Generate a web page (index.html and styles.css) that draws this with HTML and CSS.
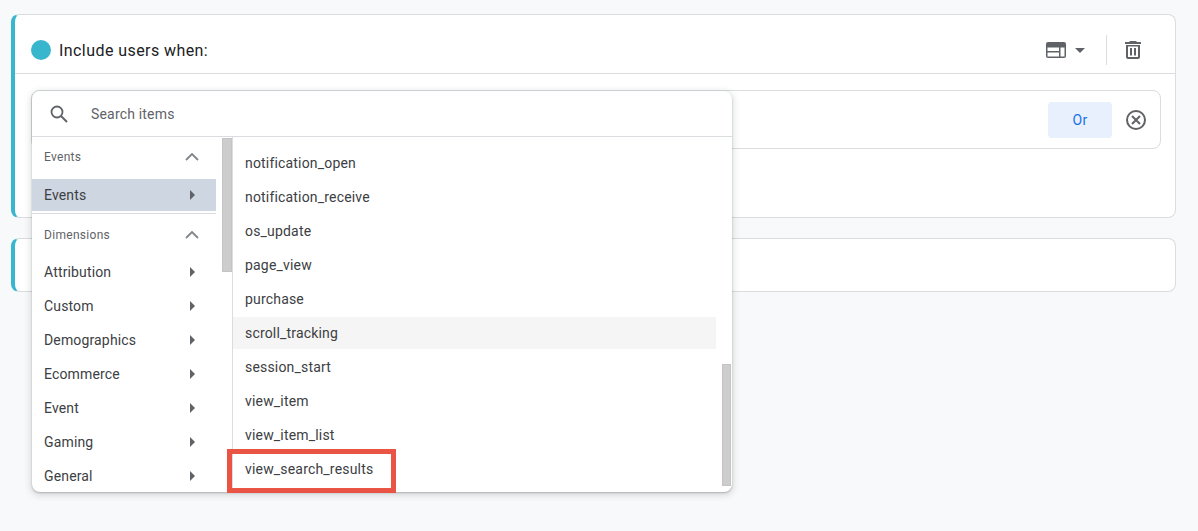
FILE: index.html
```html
<!DOCTYPE html>
<html lang="en">
<head>
<meta charset="utf-8">
<title>Include users when</title>
<link rel="stylesheet" href="styles.css">
</head>
<body>
<main class="page">
  <section class="card card-main">
    <header class="card-head">
      <span class="dot"></span>
      <h2 class="title">Include users when:</h2>
      <div class="head-tools">
        <svg class="ic-scope" width="20" height="16" viewBox="0 0 20 16"><path fill="#5f6368" fill-rule="evenodd" d="M2 0h16a2 2 0 0 1 2 2v12a2 2 0 0 1-2 2H2a2 2 0 0 1-2-2V2a2 2 0 0 1 2-2zM1.500 5.500v3.500h11.500V5.500zM1.500 10.500v4h11.500v-4zM14.500 5.500v9h4v-9z"/></svg>
        <svg class="ic-caret" width="10" height="5" viewBox="0 0 10 5"><path fill="#5f6368" d="M0 0h10L5 5z"/></svg>
        <span class="tool-sep"></span>
        <svg class="ic-trash" width="16" height="18" viewBox="0 0 16 18"><path fill="#5f6368" fill-rule="evenodd" d="M5 0h6l1 1h4v2H0V1h4zM1 4h14v12a2 2 0 0 1-2 2H3a2 2 0 0 1-2-2zM3 5.500V16h10V5.500zM5 7h2v7.500H5zM9 7h2v7.500H9z"/></svg>
      </div>
    </header>
    <div class="card-body">
      <div class="cond-row">
        <button class="or-btn" type="button">Or</button>
        <svg class="ic-close" width="20" height="20" viewBox="0 0 20 20"><circle cx="10" cy="10" r="9" fill="none" stroke="#5f6368" stroke-width="2"/><path d="M6 6l8 8M14 6l-8 8" stroke="#5f6368" stroke-width="2" fill="none"/></svg>
      </div>
    </div>
  </section>
  <section class="card card-second"></section>
</main>

<div class="menu">
  <div class="search">
    <svg class="ic-search" width="18" height="18" viewBox="0 0 18 18"><circle cx="7" cy="7" r="5.500" fill="none" stroke="#5f6368" stroke-width="1.800"/><path d="M11 11l6 6" stroke="#5f6368" stroke-width="2" fill="none"/></svg>
    <span class="search-text">Search items</span>
  </div>
  <div class="panes">
    <div class="left-pane">
      <div class="left-list">
        <div class="group first"><span>Events</span><svg width="14" height="8" viewBox="0 0 14 8"><path d="M1 7l6-6 6 6" fill="none" stroke="#80868b" stroke-width="1.800"/></svg></div>
        <div class="cat selected"><span>Events</span><i class="arrow"></i></div>
        <div class="rule"></div>
        <div class="group"><span>Dimensions</span><svg width="14" height="8" viewBox="0 0 14 8"><path d="M1 7l6-6 6 6" fill="none" stroke="#80868b" stroke-width="1.800"/></svg></div>
        <div class="cat"><span>Attribution</span><i class="arrow"></i></div>
        <div class="cat"><span>Custom</span><i class="arrow"></i></div>
        <div class="cat"><span>Demographics</span><i class="arrow"></i></div>
        <div class="cat"><span>Ecommerce</span><i class="arrow"></i></div>
        <div class="cat"><span>Event</span><i class="arrow"></i></div>
        <div class="cat"><span>Gaming</span><i class="arrow"></i></div>
        <div class="cat"><span>General</span><i class="arrow"></i></div>
      </div>
      <div class="left-track"><div class="thumb thumb-left"></div></div>
    </div>
    <div class="right-pane">
      <div class="right-list">
        <div class="item">notification_open</div>
        <div class="item">notification_receive</div>
        <div class="item">os_update</div>
        <div class="item">page_view</div>
        <div class="item">purchase</div>
        <div class="item hover">scroll_tracking</div>
        <div class="item">session_start</div>
        <div class="item">view_item</div>
        <div class="item">view_item_list</div>
        <div class="item">view_search_results</div>
      </div>
      <div class="right-track"><div class="thumb thumb-right"></div></div>
    </div>
  </div>
  <div class="callout"></div>
</div>
</body>
</html>
```

FILE: styles.css
```css
* { box-sizing: border-box; }

html, body { margin: 0; height: 531px; overflow: hidden; }

body {
  background: #f8f9fa;
  font-family: Roboto, "Liberation Sans", sans-serif;
  color: #3c4043;
  position: relative;
}

.page {
  display: flex;
  flex-direction: column;
  gap: 20px;
  padding: 14px 22px 0 11px;
}

.card {
  background: #fff;
  border: 1px solid #dadce0;
  border-left: 4px solid #37b6ce;
  border-radius: 8px;
}

.card-main { height: 204px; }
.card-second { height: 54px; }

.card-head {
  display: flex;
  align-items: center;
  height: 59px;
  padding: 12px 34px 0 16px;
  border-bottom: 1px solid #dadce0;
}

.dot {
  width: 20px;
  height: 20px;
  border-radius: 50%;
  background: #37b6ce;
  margin-right: 8px;
}

.title {
  margin: 0;
  font-size: 16px;
  font-weight: 400;
  color: #202124;
  letter-spacing: 0.43px;
}

.head-tools {
  margin-left: auto;
  display: flex;
  align-items: center;
}

.ic-caret { margin-left: 9px; }

.tool-sep {
  width: 1px;
  height: 30px;
  background: #dadce0;
  margin: 0 18px 0 21px;
}

.card-body { padding: 16px 14px 0 16px; }

.cond-row {
  height: 59px;
  border: 1px solid #dadce0;
  border-radius: 8px;
  display: flex;
  align-items: center;
  justify-content: flex-end;
  gap: 14px;
  padding-right: 14px;
}

.or-btn {
  width: 64px;
  height: 36px;
  border: 0;
  border-radius: 4px;
  background: #e8f0fe;
  color: #1a73e8;
  font: 400 14px Roboto, "Liberation Sans", sans-serif;
  letter-spacing: 0.3px;
}

/* Floating dropdown */
.menu {
  position: absolute;
  left: 32px;
  top: 91px;
  width: 700px;
  height: 401px;
  background: #fff;
  border-radius: 8px;
  box-shadow: 0 1px 2px rgba(60, 64, 67, .3), 0 2px 6px 2px rgba(60, 64, 67, .15);
  display: flex;
  flex-direction: column;
}

.search {
  flex: none;
  height: 46px;
  display: flex;
  align-items: center;
  padding-left: 18px;
  border-bottom: 1px solid #dadce0;
}

.search-text {
  margin-left: 23px;
  font-size: 14px;
  color: #5f6368;
  letter-spacing: 0.18px;
}

.panes {
  flex: 1;
  min-height: 0;
  display: flex;
  overflow: hidden;
  border-radius: 0 0 8px 8px;
}

.left-pane {
  flex: none;
  width: 201px;
  display: flex;
  border-right: 1px solid #dadce0;
}

.left-list { width: 184px; }

.group {
  display: flex;
  align-items: center;
  justify-content: space-between;
  padding: 0 17px 0 12px;
  font-size: 12px;
  color: #5f6368;
  letter-spacing: 0.3px;
}

.group.first { height: 42px; padding-bottom: 2px; }

.group:not(.first) { height: 41px; }

.cat {
  height: 34px;
  display: flex;
  align-items: center;
  justify-content: space-between;
  padding: 0 21px 0 12px;
  font-size: 14px;
  letter-spacing: 0.15px;
}

.cat.selected { height: 32px; background: #ced6e2; }

.rule { height: 1px; margin-top: 2px; background: #dadce0; }

.arrow {
  width: 0;
  height: 0;
  border-left: 5px solid #5f6368;
  border-top: 5px solid transparent;
  border-bottom: 5px solid transparent;
}

.left-track {
  flex: none;
  width: 16px;
  padding: 1px 0 0 6px;
}

.thumb { background: #cdcdcd; border: 1px solid #c4c4c4; }

.thumb-left { width: 10px; height: 134px; }

.right-pane {
  flex: 1;
  display: flex;
  min-width: 0;
}

.right-list {
  flex: 1;
  min-width: 0;
  padding-top: 9px;
}

.item {
  height: 34px;
  display: flex;
  align-items: center;
  padding-left: 12px;
  font-size: 14px;
  letter-spacing: 0.18px;
}

.item.hover {
  height: 32px;
  margin: 1px 0;
  background: #f5f5f5;
}

.right-track {
  flex: none;
  width: 16px;
  padding: 227px 1px 0 6px;
}

.thumb-right { width: 9px; height: 122px; }

.callout {
  position: absolute;
  left: 195px;
  top: 358px;
  width: 169px;
  height: 44px;
  border: 5px solid #ea5444;
}
```
